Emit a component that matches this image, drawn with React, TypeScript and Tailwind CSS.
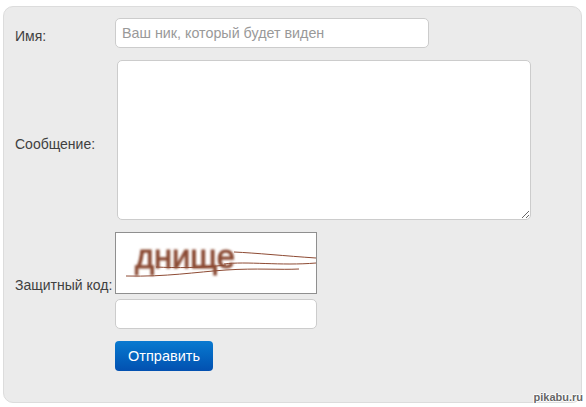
import React from "react";

const font = "font-['Liberation_Sans',Arial,sans-serif]";

/** Distorted captcha picture: real text with the noise lines drawn over it. */
const Captcha = () => (
  <div className="relative h-[62px] w-[202px] overflow-hidden border border-[#8f8f8f] bg-white">
    <svg className="block" width="200" height="60" viewBox="0 0 200 60">
      <defs>
        <filter id="soft" x="-10%" y="-20%" width="120%" height="140%">
          <feGaussianBlur stdDeviation="0.9" />
        </filter>
        <filter id="line">
          <feGaussianBlur stdDeviation="0.3" />
        </filter>
      </defs>
      <g filter="url(#soft)">
        <text
          x="19"
          y="35"
          fontFamily="'Liberation Sans', Arial, sans-serif"
          fontSize="34"
          fill="#8a4a33"
          stroke="#8a4a33"
          strokeWidth="1"
          textLength="100"
          lengthAdjust="spacingAndGlyphs"
        >
          днище
        </text>
      </g>
      <g fill="none" stroke="#8d4a33" filter="url(#line)">
        <path d="M118 19 C 140 20 170 23 200 25" strokeWidth="1" />
        <path d="M108 31 C 130 28 165 33 200 30" strokeWidth="1" />
        <path d="M40 34 C 60 35 85 35 110 32" strokeWidth="1" />
        <path d="M10 43 C 50 44 80 39 110 37 C 140 35 165 37 183 36" strokeWidth="1" />
      </g>
    </svg>
  </div>
);

const App: React.FC = () => {
  return (
    <div className={`relative h-[407px] w-[586px] overflow-hidden bg-white px-[3px] pt-[6px] ${font}`}>
      <form className="h-[397px] w-[579px] rounded-[10px] border border-[#dcdcdc] bg-[#ebebeb] pl-[11px] pt-[11px] text-[14px] text-[#404040]">
        <div className="flex h-[30px] items-center">
          <label className="w-[100px] pt-[7px]">Имя:</label>
          <input
            className="h-[30px] w-[314px] rounded-[5px] border border-[#cccccc] bg-white px-[6px] text-[14.3px] outline-none placeholder:text-[#999999]"
            placeholder="Ваш ник, который будет виден"
          />
        </div>

        <div className="mt-[12px] flex h-[160px] items-center">
          <label className="w-[102px] pt-[9px]">Сообщение:</label>
          <textarea className="h-[160px] w-[414px] rounded-[5px] border border-[#cccccc] bg-white outline-none" />
        </div>

        <div className="mt-[12px] flex">
          <label className="flex h-[61px] w-[100px] items-end whitespace-nowrap leading-[16px]">Защитный код:</label>
          <Captcha />
        </div>

        <div className="ml-[100px] mt-[5px]">
          <input className="block h-[30px] w-[202px] rounded-[5px] border border-[#cccccc] bg-white outline-none" />
          <button
            type="button"
            className="mt-[12px] block h-[30px] w-[98px] rounded-[4px] bg-gradient-to-b from-[#0a7ad0] to-[#0350b0] pt-[1px] text-[14.5px] text-white"
          >
            Отправить
          </button>
        </div>
      </form>

      {/* image host watermark */}
      <span className="absolute bottom-[4px] right-[3px] text-[11px] font-bold leading-[12px] text-[#666666] [text-shadow:1px_0_0_#fff,-1px_0_0_#fff,0_1px_0_#fff,0_-1px_0_#fff]">
        pikabu.ru
      </span>
    </div>
  );
};

export default App;
